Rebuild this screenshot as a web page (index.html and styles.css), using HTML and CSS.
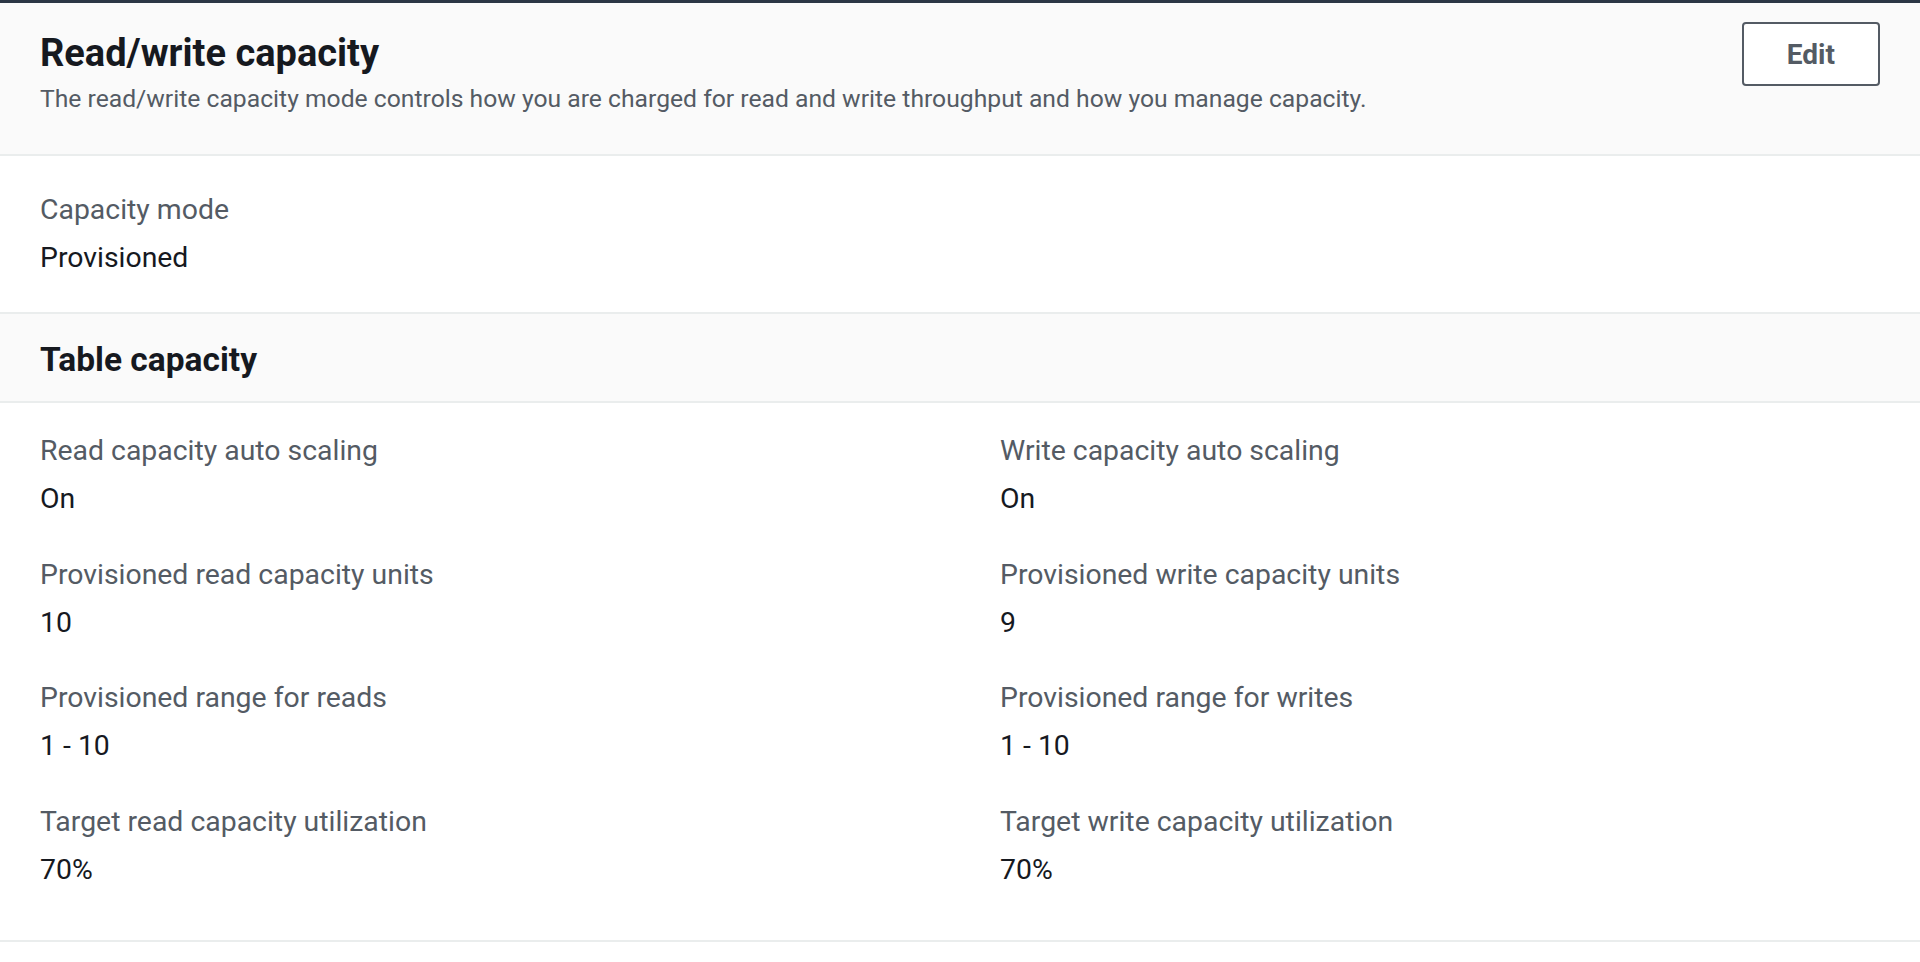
FILE: index.html
```html
<!DOCTYPE html>
<html lang="en">
<head>
<meta charset="utf-8">
<title>Read/write capacity</title>
<link rel="stylesheet" href="styles.css">
</head>
<body>
<div class="topbar"></div>
<section class="container">
  <header class="container-header">
    <div class="header-text">
      <h2 class="header-title">Read/write capacity</h2>
      <p class="header-desc">The read/write capacity mode controls how you are charged for read and write throughput and how you manage capacity.</p>
    </div>
    <div class="header-actions">
      <button class="btn" type="button">Edit</button>
    </div>
  </header>

  <div class="section-body single">
    <div class="kv">
      <div class="kv-label">Capacity mode</div>
      <div class="kv-value">Provisioned</div>
    </div>
  </div>

  <div class="sub-header">
    <h3 class="sub-title">Table capacity</h3>
  </div>

  <div class="section-body grid">
    <div class="kv">
      <div class="kv-label">Read capacity auto scaling</div>
      <div class="kv-value">On</div>
    </div>
    <div class="kv">
      <div class="kv-label">Write capacity auto scaling</div>
      <div class="kv-value">On</div>
    </div>
    <div class="kv">
      <div class="kv-label">Provisioned read capacity units</div>
      <div class="kv-value">10</div>
    </div>
    <div class="kv">
      <div class="kv-label">Provisioned write capacity units</div>
      <div class="kv-value">9</div>
    </div>
    <div class="kv">
      <div class="kv-label">Provisioned range for reads</div>
      <div class="kv-value">1 - 10</div>
    </div>
    <div class="kv">
      <div class="kv-label">Provisioned range for writes</div>
      <div class="kv-value">1 - 10</div>
    </div>
    <div class="kv">
      <div class="kv-label">Target read capacity utilization</div>
      <div class="kv-value">70%</div>
    </div>
    <div class="kv">
      <div class="kv-label">Target write capacity utilization</div>
      <div class="kv-value">70%</div>
    </div>
  </div>
</section>
</body>
</html>
```
FILE: styles.css
```css
* { box-sizing: border-box; }

html, body {
  margin: 0;
  padding: 0;
  background: #ffffff;
}

body {
  font-family: Roboto, "Liberation Sans", Arial, sans-serif;
  color: #16191f;
}

.topbar {
  height: 3px;
  background: #2b3645;
}

.container {
  display: flex;
  flex-direction: column;
}

.container-header {
  display: flex;
  justify-content: space-between;
  align-items: flex-start;
  background: #fafafa;
  padding: 19px 40px 35px 40px;
  border-bottom: 2px solid #eaeded;
}

.header-text {
  padding-top: 9px;
}

.header-title {
  margin: 0;
  font-size: 38px;
  line-height: 44px;
  font-weight: 700;
  color: #16191f;
}

.header-desc {
  margin: 4px 0 0 0;
  font-size: 24.7px;
  line-height: 40px;
  color: #545b64;
}

.header-actions {
  display: flex;
}

.btn {
  font-family: Roboto, "Liberation Sans", Arial, sans-serif;
  font-size: 28px;
  line-height: 40px;
  font-weight: 700;
  color: #545b64;
  background: #ffffff;
  border: 2px solid #545b64;
  border-radius: 4px;
  padding: 11px 43px 9px 43px;
  cursor: pointer;
}

.section-body.single {
  padding: 34px 40px 34px 40px;
  border-bottom: 2px solid #eaeded;
}

.sub-header {
  background: #fafafa;
  padding: 26px 40px 21px 40px;
  border-bottom: 2px solid #eaeded;
}

.sub-title {
  margin: 0;
  font-size: 33.5px;
  line-height: 40px;
  font-weight: 700;
  color: #16191f;
}

.section-body.grid {
  display: grid;
  grid-template-columns: 1fr 1fr;
  column-gap: 80px;
  row-gap: 35.7px;
  padding: 28px 40px 50px 40px;
  border-bottom: 2px solid #eaeded;
}

.kv {
  display: flex;
  flex-direction: column;
  gap: 8px;
}

.kv-label {
  font-size: 28.4px;
  line-height: 40px;
  color: #545b64;
}

.kv-value {
  font-size: 28.4px;
  line-height: 40px;
  color: #16191f;
}
```
